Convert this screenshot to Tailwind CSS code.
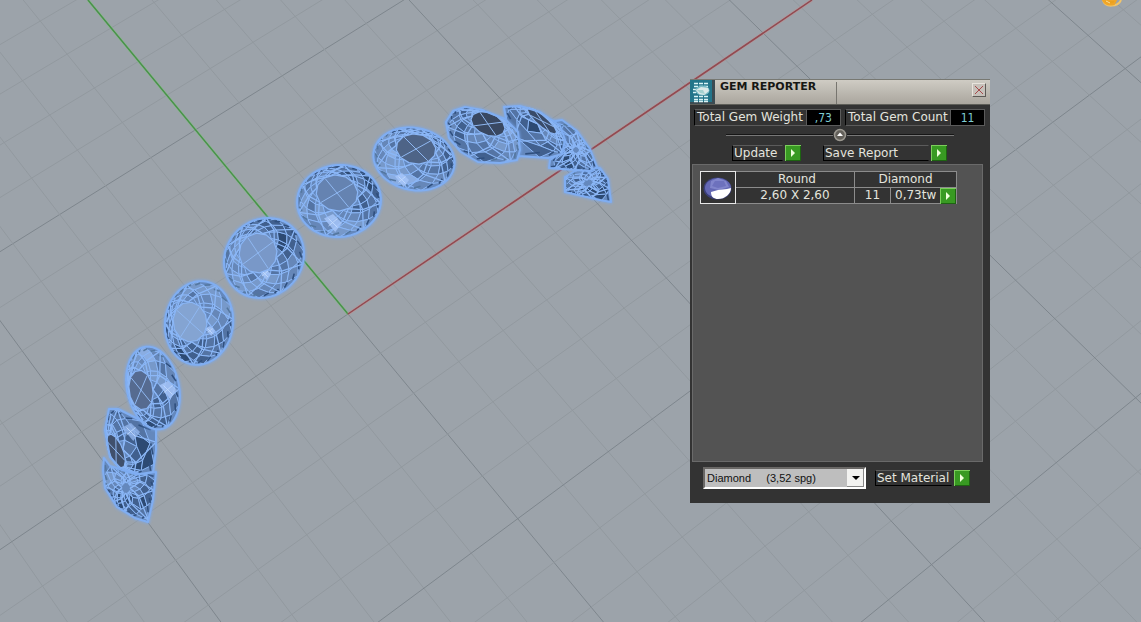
<!DOCTYPE html>
<html lang="en">
<head>
    <meta charset="UTF-8">
    <meta name="viewport" content="width=device-width, initial-scale=1.0">
    <title>Gem Reporter</title>
    <script src="https://cdn.jsdelivr.net/npm/@tailwindcss/browser@4"></script>
</head>
<body class="bg-[#9ca3aa]">
<main class="relative min-h-screen overflow-hidden font-['DejaVu_Sans',sans-serif] text-xs text-[#e4e4de]">

    <!-- Perspective viewport -->
    <svg id="viewport" class="absolute inset-0 w-full h-full" viewBox="0 0 1141 622" preserveAspectRatio="xMidYMid slice" aria-label="Perspective viewport">
        <defs>
            <filter id="soft" x="-20%" y="-20%" width="140%" height="140%"><feGaussianBlur stdDeviation="1"/></filter>
        </defs>
        <g id="grid" fill="none"></g>
        <g fill="none">
            <path d="M88 0L348 314" stroke="#88c288" stroke-width="3" opacity=".5"/>
            <path d="M88 0L348 314" stroke="#489349" stroke-width="1.5"/>
            <path d="M348 314L812 0" stroke="#c88c8c" stroke-width="3" opacity=".5"/>
            <path d="M348 314L812 0" stroke="#914a51" stroke-width="1.5"/>
        </g>
        <g id="gems" stroke-linejoin="round"></g>
        <g fill="none" stroke="#f0a628" stroke-width="2">
            <path d="M1103 0C1105 8 1118 7 1121 0" stroke="#f2c56a"/>
            <path d="M1103 0Q1106 6 1114 4L1116 0Z" fill="#eca11e" stroke="#f0a628"/>
            <path d="M1106 1l4 2" stroke="#f8dc9a" stroke-width="1"/>
        </g>
    </svg>

    <!-- Gem Reporter window -->
    <section class="absolute left-[690px] top-[79px] w-[300px] bg-[#333] pb-[14px]" aria-labelledby="title">
        <header class="flex h-[26px] border-y border-t-[#777872] border-b-[#5e5e58] bg-linear-to-b from-[#cfccc4] to-[#aaa69e]">
            <svg class="w-[25px] h-6 shrink-0" viewBox="0 0 25 24">
                <path fill="#23758a" d="M0 0h25v24H0z"/>
                <path fill="#3c4b52" d="M22 0h3v24h-3zM0 22h25v2H0z"/>
                <path d="M4 3.500h14M4 6.500h14M4 16.500h14M4 19.500h14M4 21.500h14M3 9.500h3M3 12.500h3" stroke="#d9f3f5" stroke-width="1.500" stroke-dasharray="4 1"/>
                <ellipse cx="12.500" cy="10.500" rx="7" ry="5" fill="#7bbcc6"/>
                <path d="M6 10l5-3 7 1 1 3-5 4-5-1z" fill="#dce9e8"/>
                <path d="M7 10l6 0 2 4-5-1z" fill="#a5d1d0"/>
            </svg>
            <h1 id="title" class="w-[121px] pl-[5px] text-[11px] leading-[13px] font-bold text-[#171714] whitespace-nowrap">GEM REPORTER</h1>
            <div class="flex grow justify-end border-l border-[#77756f] mt-0.5 pr-1 pt-px">
                <button class="grid w-[14px] h-[14px] place-items-center border border-t-[#e8e4dd] border-l-[#e8e4dd] border-r-[#5d5a56] border-b-[#5d5a56] bg-[#c6c0b9]" aria-label="Close">
                    <svg class="w-2 h-2" viewBox="0 0 8 8"><path d="M0 0l8 8M8 0L0 8" stroke="#a6494b"/></svg>
                </button>
            </div>
        </header>

        <!-- Totals -->
        <div class="flex gap-1 pl-1 pt-1 leading-4">
            <div class="flex w-[147px] h-[17px] border border-[#5b5b5b] border-l-black">
                <span class="grow pl-0.5 leading-[15px] whitespace-nowrap">Total Gem Weight</span>
                <output class="w-[34px] border-l border-[#5b5b5b] bg-black pr-2 text-right font-['DejaVu_Sans_Condensed'] text-[#7fcdd2]">,73</output>
            </div>
            <div class="flex w-[140px] h-[17px] border border-[#5b5b5b] border-l-black">
                <span class="grow pl-0.5 leading-[15px] whitespace-nowrap">Total Gem Count</span>
                <output class="w-[34px] border-l border-[#5b5b5b] bg-black text-center font-['DejaVu_Sans_Condensed'] text-[#7fcdd2]">11</output>
            </div>
        </div>

        <!-- Collapse handle -->
        <div class="flex h-[14px] mt-0.5 ml-9 mr-9 items-center">
            <span class="grow h-0.5 bg-[#161616] border-b border-[#777]"></span>
            <button aria-label="Collapse"><svg class="block w-[14px] h-[14px]" viewBox="0 0 14 14"><circle cx="7" cy="7" r="5.500" fill="#63605a" stroke="#9b9890" stroke-width="1.500"/><path d="M7 4.500L10 8H4z" fill="#fff"/></svg></button>
            <span class="grow h-0.5 bg-[#161616] border-b border-[#777]"></span>
        </div>

        <div class="flex items-center pl-[42px] mt-[3px] leading-4">
            <label for="update" class="w-[51px] border border-[#5b5b5b] border-l-black border-b-black border-r-[#333] pl-px h-4 leading-[15px]">Update</label>
            <button id="update" class="ml-0.5"><svg class="block w-4 h-4" viewBox="0 0 16 16"><path fill="#389a22" d="M0 0h16v16H0z"/><path fill="#7cce5c" d="M0 0h16v1H1v15H0z"/><path fill="#1d6411" d="M15 1h1v15H1v-1h14z"/><path fill="#efffdc" d="M6 4l4 4-4 4z"/></svg></button>
            <label for="save" class="ml-[22px] w-[106px] border border-[#5b5b5b] border-l-black border-b-black border-r-[#333] pl-px h-4 leading-[15px]">Save Report</label>
            <button id="save" class="ml-0.5"><svg class="block w-4 h-4" viewBox="0 0 16 16"><path fill="#389a22" d="M0 0h16v16H0z"/><path fill="#7cce5c" d="M0 0h16v1H1v15H0z"/><path fill="#1d6411" d="M15 1h1v15H1v-1h14z"/><path fill="#efffdc" d="M6 4l4 4-4 4z"/></svg></button>
        </div>

        <!-- Gem list -->
        <div class="ml-0.5 mr-[7px] mt-[3px] h-[298px] border border-[#6a6a6a] bg-[#535353] pl-[7px] pt-1.5">
            <table class="w-[257px] table-fixed border-collapse bg-[#333] text-center leading-[15px]">
                <colgroup><col class="w-[35px]"><col class="w-[119px]"><col class="w-9"><col></colgroup>
                <tbody>
                    <tr class="h-4">
                        <td rowspan="2" class="border border-[#e8e8e8] p-0">
                            <svg class="block mx-auto w-[34px] h-[31px]" viewBox="0 0 34 31">
                                <ellipse cx="16.500" cy="16.500" rx="14" ry="11" fill="#3b3f78"/>
                                <ellipse cx="17" cy="16" rx="13" ry="10" fill="#6468b4"/>
                                <path d="M10 9l7-3 8 3 3 6-10 3-9-2z" fill="#8185cb"/>
                                <path d="M14 9l9 0 2 5-8 2-6-2z" fill="#6d71bd"/>
                                <path d="M10 20l7-2 9-1 4-1c0 6-6 11-13 11-4 0-7-2-7-7z" fill="#fff"/>
                            </svg>
                        </td>
                        <td class="border border-[#8c8c8c] p-0 pl-1">Round</td>
                        <td colspan="2" class="border border-[#8c8c8c] p-0">Diamond</td>
                    </tr>
                    <tr class="h-4">
                        <td class="border border-[#8c8c8c] p-0">2,60 X 2,60</td>
                        <td class="border border-[#8c8c8c] p-0">11</td>
                        <td class="border border-[#8c8c8c] p-0">
                            <div class="flex h-[15px] items-center justify-between pl-1">
                                <span class="whitespace-nowrap">0,73tw</span>
                                <button aria-label="Select 0,73tw"><svg class="block w-4 h-4" viewBox="0 0 16 16"><path fill="#389a22" d="M0 0h16v16H0z"/><path fill="#7cce5c" d="M0 0h16v1H1v15H0z"/><path fill="#1d6411" d="M15 1h1v15H1v-1h14z"/><path fill="#efffdc" d="M6 4l4 4-4 4z"/></svg></button>
                            </div>
                        </td>
                    </tr>
                </tbody>
            </table>
        </div>

        <!-- Material -->
        <div class="flex items-center pl-[13px] pt-[5px]">
            <div class="relative w-[163px] h-[22px] border-2 border-t-[#6a6866] border-l-[#6a6866] border-r-white border-b-white bg-[#bebebe]">
                <select class="w-full h-full appearance-none pl-0.5 font-['Liberation_Sans',sans-serif] text-[11px] leading-4 text-[#111]" aria-label="Material">
                    <option>Diamond&nbsp;&nbsp;&nbsp;&nbsp; (3,52 spg)</option>
                </select>
                <svg class="pointer-events-none absolute right-0 top-0 w-[17px] h-[18px]" viewBox="0 0 17 18"><path fill="#f2f2f0" d="M0 0h17v18H0z"/><path fill="#888" d="M16 0h1v18H0v-1h16z"/><path fill="#000" d="M5 7h8L9 11z"/></svg>
            </div>
            <label for="material" class="ml-[9px] w-[77px] h-4 border border-[#5b5b5b] border-l-black border-b-black border-r-[#333] pl-px leading-[15px] whitespace-nowrap">Set Material</label>
            <button id="material" class="ml-0.5"><svg class="block w-4 h-4" viewBox="0 0 16 16"><path fill="#389a22" d="M0 0h16v16H0z"/><path fill="#7cce5c" d="M0 0h16v1H1v15H0z"/><path fill="#1d6411" d="M15 1h1v15H1v-1h14z"/><path fill="#efffdc" d="M6 4l4 4-4 4z"/></svg></button>
        </div>
    </section>
</main>

<script>
    function add(parent, tag, attrs) {
        const el = document.createElementNS('http://www.w3.org/2000/svg', tag);
        for (const key in attrs) el.setAttribute(key, attrs[key]);
        parent.appendChild(el);
    }

    // construction plane: one unit is a major cell, five minor cells each
    function project(u, v) {
        const w = 0.0435 * u - 0.053 * v + 1;
        return [(240.7 * u + 142.3 * v + 348) / w, (-139.1 * u + 177.2 * v + 314) / w];
    }
    const grid = document.getElementById('grid');
    for (let n = -25; n <= 30; n++) {
        const major = n % 5 === 0;
        const stroke = major ? '#7e868d' : '#92999f';
        const t = n / 5;
        add(grid, 'path', { d: 'M' + project(t, -5) + 'L' + project(t, 5), stroke: stroke });
        add(grid, 'path', { d: 'M' + project(-5, t) + 'L' + project(6, t), stroke: stroke });
    }

    function ellipse(cx, cy, rx, ry, deg, count) {
        const r = deg * Math.PI / 180;
        const pts = [];
        for (let i = 0; i < count; i++) {
            const a = (i + .5) / count * Math.PI * 2;
            const x = rx * Math.cos(a), y = ry * Math.sin(a);
            pts.push([cx + x * Math.cos(r) - y * Math.sin(r), cy + x * Math.sin(r) + y * Math.cos(r)]);
        }
        return pts;
    }

    // where the ray from c through p leaves the outline
    function reach(c, p, outline) {
        const dx = p[0] - c[0], dy = p[1] - c[1];
        let best = 0;
        outline.forEach((a, i) => {
            const b = outline[(i + 1) % outline.length];
            const ex = b[0] - a[0], ey = b[1] - a[1];
            const det = dx * ey - dy * ex;
            const t = ((a[0] - c[0]) * ey - (a[1] - c[1]) * ex) / det;
            const s = ((a[0] - c[0]) * dy - (a[1] - c[1]) * dx) / det;
            if (s >= 0 && s <= 1 && t > best) best = t;
        });
        return [c[0] + dx * best, c[1] + dy * best];
    }

    // table: [cx, cy, rx, ry, rotation]; dark: direction of the dark facets; glint: [x, y, size]
    const gems = [
        { outline: [[104,458],[110,466],[135,474],[156,472],[153,500],[148,522],[135,518],[117,507],[105,488],[103,470]], hub: [126,488,4,5,0], dark: 70, tone: .9 },
        { outline: [[109,409],[118,409],[140,420],[156,430],[156,450],[153,472],[140,474],[120,468],[110,457],[105,430]], table: [116,451,7,18,-22], fill: '#40506c', dark: 10, tone: .7, glint: [131,432,9], glintFill: '#8fb3ea' },
        { outline: ellipse(153,388,26,42,-12,48), table: [141,390,12,20,-8], fill: '#566b90', dark: 75, tone: .35, glint: [168,390,9] },
        { outline: ellipse(199,323,34,42,8,48), table: [190,322,17,20,-8], fill: '#84a4d2', dark: 105, tone: .4, glint: [210,331,5] },
        { outline: ellipse(264,258,42,38,-45,48), table: [258,253,19,20,10], fill: '#7998c8', dark: -40, tone: .4, glint: [265,274,6] },
        { outline: ellipse(339,201,42,36,-6,48), table: [337,193,21,18,10], fill: '#6583b1', dark: -50, tone: .5, glint: [333,223,9] },
        { outline: ellipse(414,159,41,31,12,48), table: [416,149,20,15,8], fill: '#4e6487', dark: -45, tone: .35, glint: [402,180,7] },
        { outline: [[565,177],[580,168],[600,168],[608,179],[611,202],[600,200],[565,192]], hub: [588,183,5,3,-20], dark: 60, tone: 1.3 },
        { outline: [[550,122],[562,120],[577,131],[590,149],[597,167],[590,171],[549,168],[550,160],[562,152],[560,135]], hub: [576,150,3,3,0], dark: 130, tone: .9 },
        { outline: [[504,107],[520,106],[540,112],[560,126],[565,140],[562,154],[548,158],[519,156],[515,146],[508,130]], table: [542,121,19,5,41], fill: '#394b69', dark: 130, tone: .7 },
        { outline: [[446,122],[453,111],[465,107],[482,110],[505,119],[518,132],[520,150],[517,160],[500,163],[478,162],[461,152],[449,138]], table: [488,124,18,11,24], fill: '#394862', dark: 175, tone: .2 }
    ];
    const shades = ['#8aade2', '#7799ca', '#6687b8', '#5474a4', '#41608e', '#2d4a73'];
    const edge = '#8bb7f7';
    const root = document.getElementById('gems');

    gems.forEach((gem, index) => {
        const [cx, cy, rx, ry, rot] = gem.table || gem.hub;
        const count = 48;
        const rim = 'M' + gem.outline.join('L') + 'Z';
        add(root, 'path', { d: rim, fill: 'none', stroke: '#79a9f0', 'stroke-width': 4, opacity: .6, filter: 'url(#soft)' });
        add(root, 'path', { d: rim, fill: '#6488bd' });

        const inner = ellipse(cx, cy, rx, ry, rot, count);
        const outer = inner.map(p => reach([cx, cy], p, gem.outline));
        const at = (i, t) => {
            const k = (i + count) % count;
            return [inner[k][0] + (outer[k][0] - inner[k][0]) * t, inner[k][1] + (outer[k][1] - inner[k][1]) * t];
        };
        // lattice of lozenge cells, shaded by the main facet they belong to
        const rings = [0, .2, .42, .62, .82, 1];
        for (let j = 0; j < 4; j++) {
            for (let i = j % 2 * 2; i < count; i += 4) {
                const p = at(i, rings[j + 1]);
                const angle = Math.atan2(p[1] - cy, p[0] - cx) - gem.dark * Math.PI / 180;
                const facet = (Math.floor(i / 6) * 5 + index * 3 + (j > 1 ? 4 : 0)) % 8 / 8;
                const level = (Math.cos(angle) + 1) * 1.2 + facet * 2 + gem.tone * 1.3 + (i * 7 + j * 3) % 5 * .2;
                const shade = shades[Math.max(0, Math.min(5, Math.floor(level)))];
                add(root, 'path', { d: 'M' + [at(i, rings[j]), at(i + 2, rings[j + 1]), at(i, rings[j + 2]), at(i - 2, rings[j + 1])].join('L') + 'Z', fill: shade, stroke: edge, 'stroke-width': 1 });
            }
        }
        // dark slivers along the girdle
        for (let i = 0; i < count; i += 2) {
            const angle = (i / count) * 2 * Math.PI - gem.dark * Math.PI / 180;
            add(root, 'path', { d: 'M' + at(i, .84) + 'L' + at(i + 1, .92), stroke: Math.cos(angle) > -.3 ? '#2f4f7e' : '#54779f', 'stroke-width': 1.6 });
        }
        // main facet edges
        for (let i = 0; i < count; i += 6) {
            const d = 'M' + at(i, 0) + 'L' + at(i + 3, .4) + 'L' + at(i + 6, 0)
                + 'M' + at(i + 3, .4) + 'L' + at(i, 1) + 'M' + at(i + 3, .4) + 'L' + at(i + 6, 1);
            add(root, 'path', { d: d, fill: 'none', stroke: edge, 'stroke-width': 1.3 });
        }
        if (gem.glint) {
            const [x, y, s] = gem.glint;
            add(root, 'path', { d: `M${x - s} ${y - s / 2}L${x} ${y - s}L${x + s} ${y}L${x + s / 4} ${y + s}Z`, fill: gem.glintFill || '#a4c4f8', opacity: .85 });
            add(root, 'path', { d: `M${x - s / 2} ${y + s / 3}L${x + s / 2} ${y - s / 2}M${x - s / 2} ${y - s / 2}L${x + s / 2} ${y + s / 2}`, stroke: '#c3dafc', 'stroke-width': .8 });
        }
        if (gem.table) {
            const top = ellipse(cx, cy, rx, ry, rot, 12);
            const cross = ellipse(cx, cy, rx * .95, ry * .95, rot, 4);
            add(root, 'path', { d: 'M' + top.join('L') + 'Z', fill: gem.fill, stroke: edge, 'stroke-width': 1.2 });
            add(root, 'path', { d: 'M' + cross[0] + 'L' + cross[2] + 'M' + cross[1] + 'L' + cross[3], stroke: '#8fb8f2', 'stroke-width': 1 });
        }
        add(root, 'path', { d: rim, fill: 'none', stroke: '#80aef2', 'stroke-width': 2 });
    });
</script>
</body>
</html>
